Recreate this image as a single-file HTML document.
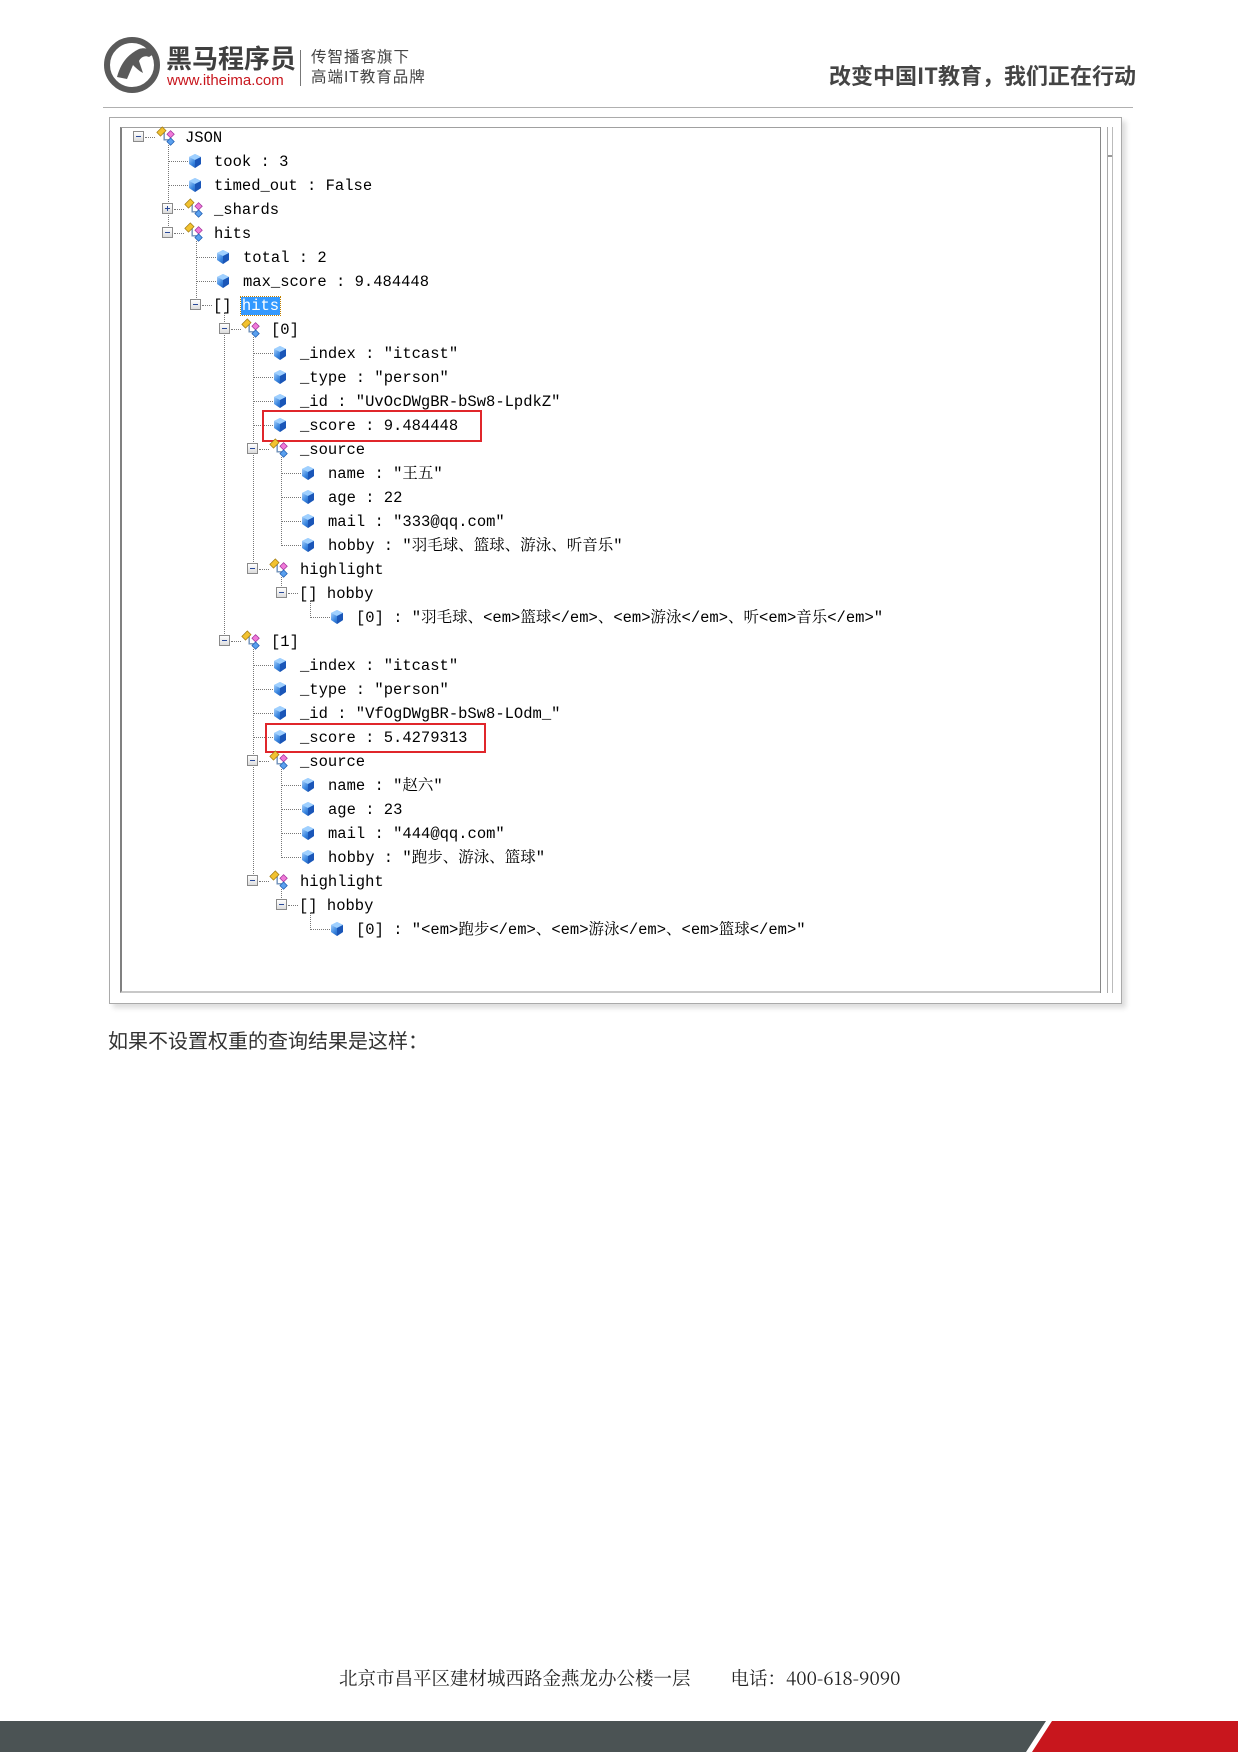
<!DOCTYPE html>
<html><head><meta charset="utf-8">
<style>
*{margin:0;padding:0;box-sizing:border-box}
body{width:1240px;height:1752px;position:relative;background:#fff;overflow:hidden;font-family:"Liberation Sans","Noto Sans CJK SC",sans-serif}
.a{position:absolute}
.r{position:absolute;height:20px;line-height:20px;font-family:"Liberation Mono","Noto Serif CJK SC",monospace;font-size:15.5px;color:#000;white-space:nowrap}
.ex{position:absolute;width:11px;height:11px;border:1px solid #8a8a8a;background:linear-gradient(#fff,#dcdcdc);}
.ex:after{content:"";position:absolute;left:2px;top:4px;width:5px;height:1px;background:#2a4a9a}
.ex.p:before{content:"";position:absolute;left:4px;top:2px;width:1px;height:5px;background:#2a4a9a}
.h{position:absolute;height:0;border-top:1px dotted #777}
.v{position:absolute;width:0;border-left:1px dotted #777}
.rb{position:absolute;border:2px solid #e0262b}
</style></head><body>
<svg width="0" height="0" style="position:absolute">
<defs>
<linearGradient id="cb" x1="0" y1="0" x2="1" y2="1"><stop offset="0" stop-color="#bfe0ff"/><stop offset=".5" stop-color="#3a86e0"/><stop offset="1" stop-color="#0b3f9a"/></linearGradient>
<symbol id="leaf" viewBox="0 0 14 16"><path d="M7 1 L13 4 L13 11 L7 15 L1 11 L1 4 Z" fill="url(#cb)"/><path d="M7 1 L13 4 L7 7 L1 4Z" fill="#9fd0ff"/><path d="M7 7 L13 4 L13 11 L7 15Z" fill="#1a56b8"/></symbol>
<symbol id="obj" viewBox="0 0 24 24"><path d="M10 6 V15 H15" fill="none" stroke="#6d8fb8" stroke-width="1.5"/><path d="M2 7 L8 1 L12 5 L6 11Z" fill="#f2c230" stroke="#a07a10" stroke-width=".8"/><path d="M13 9 L17 5 L21 9 L17 13Z" fill="#f07ad8" stroke="#a0309a" stroke-width=".8"/><path d="M13 17 L17 13 L21 17 L17 21Z" fill="#5aa0ee" stroke="#1a5ab0" stroke-width=".8"/></symbol>
</defs></svg>

<!-- header -->
<svg class="a" style="left:103px;top:37px" width="58" height="56" viewBox="0 0 58 56"><circle cx="29" cy="28" r="25" fill="none" stroke="#5a5a5a" stroke-width="6"/><path d="M14 40 C18 26 24 18 36 12 C42 10 48 12 52 16 L46 20 C42 18 38 20 36 24 L40 36 C36 34 32 30 30 28 L24 42Z" fill="#5a5a5a"/></svg>
<div class="a" style="left:166px;top:42px;font-size:26px;font-weight:bold;color:#3f3f3f;font-family:'Noto Sans CJK SC',sans-serif;line-height:32px">黑马程序员</div>
<div class="a" style="left:167px;top:72px;font-size:15px;color:#c8161d;line-height:18px">www.itheima.com</div>
<div class="a" style="left:300px;top:50px;width:1px;height:36px;background:#777"></div>
<div class="a" style="left:311px;top:48px;font-size:15.5px;color:#444;line-height:20px;letter-spacing:1px">传智播客旗下<br>高端IT教育品牌</div>
<div class="a" style="left:829px;top:60px;font-size:22px;font-weight:bold;color:#444;line-height:30px;font-family:'Noto Sans CJK SC',sans-serif">改变中国IT教育，我们正在行动</div>
<div class="a" style="left:103px;top:107px;width:1030px;height:1px;background:#b0b0b0"></div>

<!-- frame -->
<div class="a" style="left:109px;top:117px;width:1013px;height:887px;border:1px solid #aaa;box-shadow:4px 4px 5px #ddd;background:#fff"></div>
<div class="a" style="left:120px;top:127px;width:980px;height:866px;border-top:1px solid #a0a0a0;border-left:2px solid #808080;border-bottom:2px solid #c8c8c8"></div>
<div class="a" style="left:1100px;top:127px;width:1px;height:866px;background:#888"></div>
<div class="a" style="left:1107px;top:127px;width:1px;height:866px;background:#aaa"></div>
<div class="a" style="left:1112px;top:127px;width:1px;height:866px;background:#bbb"></div>
<div class="a" style="left:1108px;top:155px;width:4px;height:2px;background:#999"></div>

<!-- vertical lines -->
<div class="v" style="left:168px;top:145px;height:89px"></div>
<div class="v" style="left:196px;top:241px;height:65px"></div>
<div class="v" style="left:224px;top:313px;height:329px"></div>
<div class="v" style="left:253px;top:337px;height:233px"></div>
<div class="v" style="left:281px;top:457px;height:89px"></div>
<div class="v" style="left:281px;top:577px;height:17px"></div>
<div class="v" style="left:310px;top:601px;height:17px"></div>
<div class="v" style="left:253px;top:649px;height:233px"></div>
<div class="v" style="left:281px;top:769px;height:89px"></div>
<div class="v" style="left:281px;top:889px;height:17px"></div>
<div class="v" style="left:310px;top:913px;height:17px"></div>

<div class="ex" style="left:133px;top:131px"></div><div class="h" style="left:145px;top:137px;width:10px"></div>
<svg class="a" style="left:155px;top:126px" width="22" height="22"><use href="#obj"/></svg>
<div class="r" style="left:185px;top:128px">JSON</div>
<div class="h" style="left:168px;top:161px;width:20px"></div>
<svg class="a" style="left:188px;top:153px" width="14" height="16"><use href="#leaf"/></svg>
<div class="r" style="left:214px;top:152px">took : 3</div>
<div class="h" style="left:168px;top:185px;width:20px"></div>
<svg class="a" style="left:188px;top:177px" width="14" height="16"><use href="#leaf"/></svg>
<div class="r" style="left:214px;top:176px">timed_out : False</div>
<div class="ex p" style="left:162px;top:203px"></div><div class="h" style="left:174px;top:209px;width:10px"></div>
<svg class="a" style="left:183px;top:198px" width="22" height="22"><use href="#obj"/></svg>
<div class="r" style="left:214px;top:200px">_shards</div>
<div class="ex" style="left:162px;top:227px"></div><div class="h" style="left:174px;top:233px;width:10px"></div>
<svg class="a" style="left:183px;top:222px" width="22" height="22"><use href="#obj"/></svg>
<div class="r" style="left:214px;top:224px">hits</div>
<div class="h" style="left:196px;top:257px;width:20px"></div>
<svg class="a" style="left:216px;top:249px" width="14" height="16"><use href="#leaf"/></svg>
<div class="r" style="left:243px;top:248px">total : 2</div>
<div class="h" style="left:196px;top:281px;width:20px"></div>
<svg class="a" style="left:216px;top:273px" width="14" height="16"><use href="#leaf"/></svg>
<div class="r" style="left:243px;top:272px">max_score : 9.484448</div>
<div class="ex" style="left:190px;top:299px"></div><div class="h" style="left:202px;top:305px;width:10px"></div>
<div class="r" style="left:213px;top:296px">[] <span style="background:#3399ff;color:#fff;outline:1px dotted #c08000;padding:0 1px">hits</span></div>
<div class="ex" style="left:219px;top:323px"></div><div class="h" style="left:231px;top:329px;width:10px"></div>
<svg class="a" style="left:240px;top:318px" width="22" height="22"><use href="#obj"/></svg>
<div class="r" style="left:271px;top:320px">[0]</div>
<div class="h" style="left:253px;top:353px;width:20px"></div><svg class="a" style="left:273px;top:345px" width="14" height="16"><use href="#leaf"/></svg><div class="r" style="left:300px;top:344px">_index : "itcast"</div>
<div class="h" style="left:253px;top:377px;width:20px"></div><svg class="a" style="left:273px;top:369px" width="14" height="16"><use href="#leaf"/></svg><div class="r" style="left:300px;top:368px">_type : "person"</div>
<div class="h" style="left:253px;top:401px;width:20px"></div><svg class="a" style="left:273px;top:393px" width="14" height="16"><use href="#leaf"/></svg><div class="r" style="left:300px;top:392px">_id : "UvOcDWgBR-bSw8-LpdkZ"</div>
<div class="h" style="left:253px;top:425px;width:20px"></div><svg class="a" style="left:273px;top:417px" width="14" height="16"><use href="#leaf"/></svg><div class="r" style="left:300px;top:416px">_score : 9.484448</div>
<div class="rb" style="left:262px;top:410px;width:220px;height:32px"></div>
<div class="ex" style="left:247px;top:443px"></div><div class="h" style="left:259px;top:449px;width:10px"></div>
<svg class="a" style="left:268px;top:438px" width="22" height="22"><use href="#obj"/></svg>
<div class="r" style="left:300px;top:440px">_source</div>
<div class="h" style="left:281px;top:473px;width:20px"></div><svg class="a" style="left:301px;top:465px" width="14" height="16"><use href="#leaf"/></svg><div class="r" style="left:328px;top:464px">name : "王五"</div>
<div class="h" style="left:281px;top:497px;width:20px"></div><svg class="a" style="left:301px;top:489px" width="14" height="16"><use href="#leaf"/></svg><div class="r" style="left:328px;top:488px">age : 22</div>
<div class="h" style="left:281px;top:521px;width:20px"></div><svg class="a" style="left:301px;top:513px" width="14" height="16"><use href="#leaf"/></svg><div class="r" style="left:328px;top:512px">mail : "333@qq.com"</div>
<div class="h" style="left:281px;top:545px;width:20px"></div><svg class="a" style="left:301px;top:537px" width="14" height="16"><use href="#leaf"/></svg><div class="r" style="left:328px;top:536px">hobby : "羽毛球、篮球、游泳、听音乐"</div>
<div class="ex" style="left:247px;top:563px"></div><div class="h" style="left:259px;top:569px;width:10px"></div>
<svg class="a" style="left:268px;top:558px" width="22" height="22"><use href="#obj"/></svg>
<div class="r" style="left:300px;top:560px">highlight</div>
<div class="ex" style="left:276px;top:587px"></div><div class="h" style="left:288px;top:593px;width:10px"></div>
<div class="r" style="left:299px;top:584px">[] hobby</div>
<div class="h" style="left:310px;top:617px;width:20px"></div><svg class="a" style="left:330px;top:609px" width="14" height="16"><use href="#leaf"/></svg><div class="r" style="left:356px;top:608px">[0] : "羽毛球、&lt;em&gt;篮球&lt;/em&gt;、&lt;em&gt;游泳&lt;/em&gt;、听&lt;em&gt;音乐&lt;/em&gt;"</div>
<div class="ex" style="left:219px;top:635px"></div><div class="h" style="left:231px;top:641px;width:10px"></div>
<svg class="a" style="left:240px;top:630px" width="22" height="22"><use href="#obj"/></svg>
<div class="r" style="left:271px;top:632px">[1]</div>
<div class="h" style="left:253px;top:665px;width:20px"></div><svg class="a" style="left:273px;top:657px" width="14" height="16"><use href="#leaf"/></svg><div class="r" style="left:300px;top:656px">_index : "itcast"</div>
<div class="h" style="left:253px;top:689px;width:20px"></div><svg class="a" style="left:273px;top:681px" width="14" height="16"><use href="#leaf"/></svg><div class="r" style="left:300px;top:680px">_type : "person"</div>
<div class="h" style="left:253px;top:713px;width:20px"></div><svg class="a" style="left:273px;top:705px" width="14" height="16"><use href="#leaf"/></svg><div class="r" style="left:300px;top:704px">_id : "VfOgDWgBR-bSw8-LOdm_"</div>
<div class="h" style="left:253px;top:737px;width:20px"></div><svg class="a" style="left:273px;top:729px" width="14" height="16"><use href="#leaf"/></svg><div class="r" style="left:300px;top:728px">_score : 5.4279313</div>
<div class="rb" style="left:265px;top:723px;width:221px;height:30px"></div>
<div class="ex" style="left:247px;top:755px"></div><div class="h" style="left:259px;top:761px;width:10px"></div>
<svg class="a" style="left:268px;top:750px" width="22" height="22"><use href="#obj"/></svg>
<div class="r" style="left:300px;top:752px">_source</div>
<div class="h" style="left:281px;top:785px;width:20px"></div><svg class="a" style="left:301px;top:777px" width="14" height="16"><use href="#leaf"/></svg><div class="r" style="left:328px;top:776px">name : "赵六"</div>
<div class="h" style="left:281px;top:809px;width:20px"></div><svg class="a" style="left:301px;top:801px" width="14" height="16"><use href="#leaf"/></svg><div class="r" style="left:328px;top:800px">age : 23</div>
<div class="h" style="left:281px;top:833px;width:20px"></div><svg class="a" style="left:301px;top:825px" width="14" height="16"><use href="#leaf"/></svg><div class="r" style="left:328px;top:824px">mail : "444@qq.com"</div>
<div class="h" style="left:281px;top:857px;width:20px"></div><svg class="a" style="left:301px;top:849px" width="14" height="16"><use href="#leaf"/></svg><div class="r" style="left:328px;top:848px">hobby : "跑步、游泳、篮球"</div>
<div class="ex" style="left:247px;top:875px"></div><div class="h" style="left:259px;top:881px;width:10px"></div>
<svg class="a" style="left:268px;top:870px" width="22" height="22"><use href="#obj"/></svg>
<div class="r" style="left:300px;top:872px">highlight</div>
<div class="ex" style="left:276px;top:899px"></div><div class="h" style="left:288px;top:905px;width:10px"></div>
<div class="r" style="left:299px;top:896px">[] hobby</div>
<div class="h" style="left:310px;top:929px;width:20px"></div><svg class="a" style="left:330px;top:921px" width="14" height="16"><use href="#leaf"/></svg><div class="r" style="left:356px;top:920px">[0] : "&lt;em&gt;跑步&lt;/em&gt;、&lt;em&gt;游泳&lt;/em&gt;、&lt;em&gt;篮球&lt;/em&gt;"</div>

<div class="a" style="left:108px;top:1026px;font-size:20px;color:#333;line-height:28px;font-family:'Noto Sans CJK SC',sans-serif">如果不设置权重的查询结果是这样：</div>

<div class="a" style="left:339px;top:1665px;font-size:18.5px;color:#222;line-height:26px;font-family:'Noto Serif CJK SC',serif;white-space:nowrap">北京市昌平区建材城西路金燕龙办公楼一层<span style="display:inline-block;width:40px"></span>电话：400-618-9090</div>

<svg class="a" style="left:0;top:1721px" width="1240" height="31"><rect x="0" y="0" width="1240" height="31" fill="#4b5354"/><polygon points="1046,0 1240,0 1240,31 1026,31" fill="#fff"/><polygon points="1052,0 1238,0 1238,31 1032,31" fill="#c8161d"/></svg>
</body></html>
